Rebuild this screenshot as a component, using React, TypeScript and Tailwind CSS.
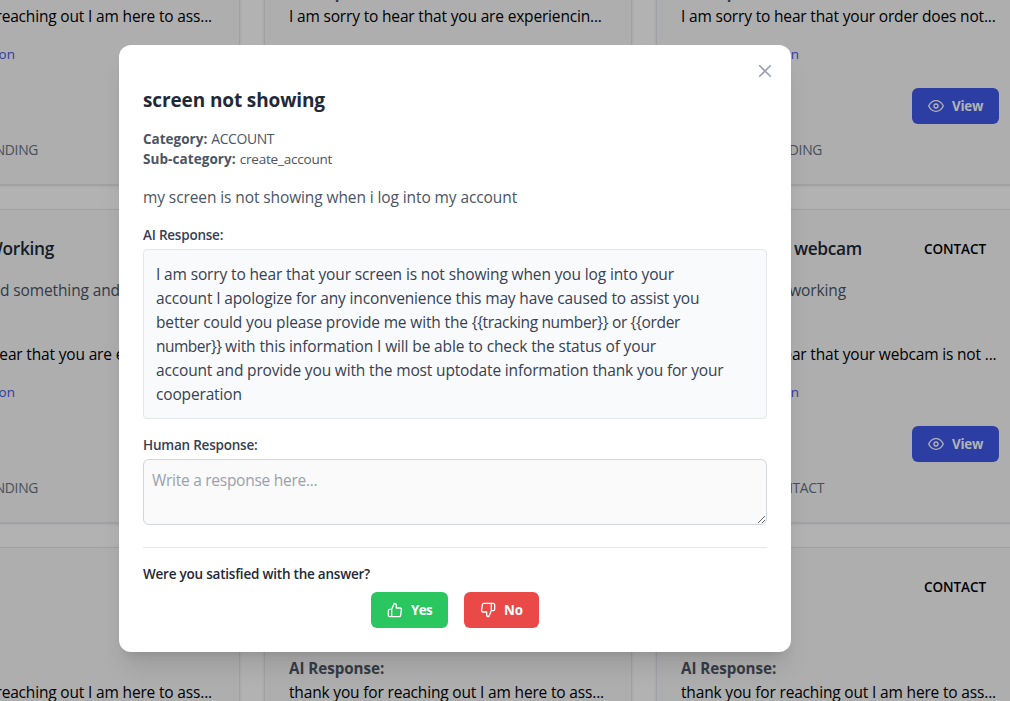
import type { ReactNode } from 'react';
import { FiThumbsUp, FiThumbsDown, FiEye } from 'react-icons/fi';

type Ticket = {
  title: string;
  titleClass: string;
  text: string;
  textClass: string;
  answer: string;
  status: 'PENDING' | 'CONTACT';
};

const THANKS = 'thank you for reaching out I am here to ass...';

const tickets: Ticket[] = [
  { title: 'Help', titleClass: 'w-[40px]', text: 'Need help', textClass: 'w-[76px]', answer: THANKS, status: 'PENDING' },
  { title: 'Account', titleClass: 'w-[70px]', text: 'Login issue', textClass: 'w-[80px]', answer: 'I am sorry to hear that you are experiencin...', status: 'PENDING' },
  { title: 'Order', titleClass: 'w-[60px]', text: 'Wrong order', textClass: 'w-[90px]', answer: 'I am sorry to hear that your order does not...', status: 'PENDING' },
  { title: 'Order Not Working', titleClass: 'w-[157px]', text: 'I have ordered something and', textClass: 'w-[223px]', answer: 'I am sorry to hear that you are experiencin...', status: 'PENDING' },
  { title: 'Screen', titleClass: 'w-[60px]', text: 'my screen', textClass: 'w-[76px]', answer: 'I am sorry to hear that your screen is not ...', status: 'PENDING' },
  { title: 'Problem with webcam', titleClass: 'w-[181px]', text: 'webcam is not working', textClass: 'w-[165px]', answer: 'I am sorry to hear that your webcam is not ...', status: 'CONTACT' },
  { title: 'Help', titleClass: 'w-[40px]', text: 'help', textClass: 'w-[40px]', answer: THANKS, status: 'PENDING' },
  { title: 'Help', titleClass: 'w-[40px]', text: 'help', textClass: 'w-[40px]', answer: THANKS, status: 'PENDING' },
  { title: 'Help', titleClass: 'w-[40px]', text: 'help', textClass: 'w-[40px]', answer: THANKS, status: 'CONTACT' },
];

function TicketCard({ ticket }: { ticket: Ticket }) {
  return (
    <article className="flex h-[314px] flex-col rounded-lg border border-gray-200 bg-gray-50 p-6 whitespace-nowrap shadow-sm">
      <div className="flex items-center justify-between">
        <h3 className={`flex justify-end pt-px text-[17.3px] leading-7 font-semibold tracking-[-0.3px] text-gray-800 ${ticket.titleClass}`}>{ticket.title}</h3>
        <span className="mr-[13px] text-[13.5px] leading-5 font-semibold tracking-[-0.07px] text-black">CONTACT</span>
      </div>
      <p className={`mt-[15px] flex justify-end text-[15.5px] leading-6 tracking-[-0.12px] text-gray-600 ${ticket.textClass}`}>{ticket.text}</p>
      <div className="mt-4 text-[15.2px] leading-6 font-bold tracking-[-0.05px] text-gray-600">AI Response:</div>
      <p className="text-[15.5px] leading-6 tracking-[-0.17px] text-black">{ticket.answer}</p>
      <a className="mt-4 flex w-[118px] justify-end text-[13.5px] leading-5 text-[#4559e2]">View conversation</a>
      <button className="mt-6 flex h-9 w-[87px] shrink-0 items-center gap-2 self-end rounded-md bg-[#3f58ea] px-4 text-[13.3px] font-bold tracking-[-0.2px] text-white">
        <FiEye className="size-4 shrink-0" />
        <span className="pt-px">View</span>
      </button>
      <div className={`mt-4 flex justify-end text-[13.9px] leading-5 tracking-[-0.35px] text-gray-500 ${ticket.status === 'CONTACT' ? 'w-[143px]' : 'w-[141px]'}`}>
        Current status: {ticket.status}
      </div>
    </article>
  );
}

function Label({ children }: { children: ReactNode }) {
  return <div className="text-[13.5px] leading-5 font-semibold tracking-[-0.22px] text-gray-700">{children}</div>;
}

function TicketDialog() {
  return (
    <section className="relative h-[607px] w-[672px] shrink-0 rounded-xl bg-white px-6 pt-[41px] whitespace-nowrap shadow-xl">
      <button aria-label="Close" className="absolute top-4 right-4 flex size-5 items-center justify-center text-gray-400">
        <svg viewBox="0 0 20 20" className="size-5" fill="none" stroke="currentColor" strokeWidth="1.6">
          <path d="M4.2 4.2l11.6 11.6M15.8 4.2L4.2 15.8" />
        </svg>
      </button>
      <h2 className="text-[19px] leading-7 font-bold tracking-[-0.12px] text-gray-800">screen not showing</h2>
      <dl className="mt-[15px] text-[13.5px] leading-5 text-gray-600">
        <div className="flex gap-1">
          <dt className="font-bold">Category:</dt>
          <dd className="text-[13.9px] tracking-[-0.35px]">ACCOUNT</dd>
        </div>
        <div className="flex gap-1">
          <dt className="font-bold tracking-[0.07px]">Sub-category:</dt>
          <dd className="tracking-[-0.2px]">create_account</dd>
        </div>
      </dl>
      <p className="mt-4 text-[15.5px] leading-6 tracking-[-0.1px] text-gray-600">my screen is not showing when i log into my account</p>
      <div className="mt-4"><Label>AI Response:</Label></div>
      <div className="mt-1 rounded border border-gray-200 bg-gray-50 p-3 text-[15.5px] leading-6 text-gray-700">
        <div className="tracking-[-0.137px]">I am sorry to hear that your screen is not showing when you log into your</div>
        <div className="tracking-[-0.14px]">account I apologize for any inconvenience this may have caused to assist you</div>
        <div>
          <span className="tracking-[-0.15px]">better could you please provide me with the </span>
          <span className="tracking-[-0.34px]">{'{{tracking number}} or {{order'}</span>
        </div>
        <div>
          <span className="tracking-[-0.5px]">{'number}} '}</span>
          <span className="tracking-[-0.13px]">with this information I will be able to check the status of your</span>
        </div>
        <div className="tracking-[-0.156px]">account and provide you with the most uptodate information thank you for your</div>
        <div className="tracking-[-0.156px]">cooperation</div>
      </div>
      <div className="mt-4"><Label>Human Response:</Label></div>
      <textarea
        placeholder="Write a response here..."
        className="mt-1 block h-[66px] w-full resize-y rounded-md border border-gray-300 bg-[#fafafa] p-2 text-[15.5px] leading-6 tracking-[-0.27px] placeholder:text-gray-400"
      />
      <div className="mt-[22px] border-t border-gray-200 pt-4">
        <div className="text-[13.5px] leading-5 font-semibold tracking-[-0.22px] text-gray-800">Were you satisfied with the answer?</div>
        <div className="mt-2 flex justify-center gap-4 text-[13.3px] font-bold text-white">
          <button className="flex h-9 w-[77px] items-center gap-2 rounded-md bg-[#2ac65f] px-4 tracking-[-0.6px]">
            <FiThumbsUp className="size-4 shrink-0" />
            <span className="pt-px">Yes</span>
          </button>
          <button className="flex h-9 w-[75px] items-center gap-2 rounded-md bg-[#ea4a47] px-4">
            <FiThumbsDown className="size-4 shrink-0" />
            <span className="pt-px">No</span>
          </button>
        </div>
      </div>
    </section>
  );
}

export default function App() {
  return (
    <div className="relative h-[701px] w-[1010px] overflow-hidden bg-white font-['Open_Sans','Noto_Sans',sans-serif]">
      <main className="-mt-[129px] -ml-[128px] grid w-[1152px] grid-cols-3 gap-6">
        {tickets.map((ticket, i) => (
          <TicketCard key={i} ticket={ticket} />
        ))}
      </main>
      <div className="absolute inset-0 flex items-start justify-center bg-black/30 pt-[45px] pr-[100px]">
        <TicketDialog />
      </div>
    </div>
  );
}
